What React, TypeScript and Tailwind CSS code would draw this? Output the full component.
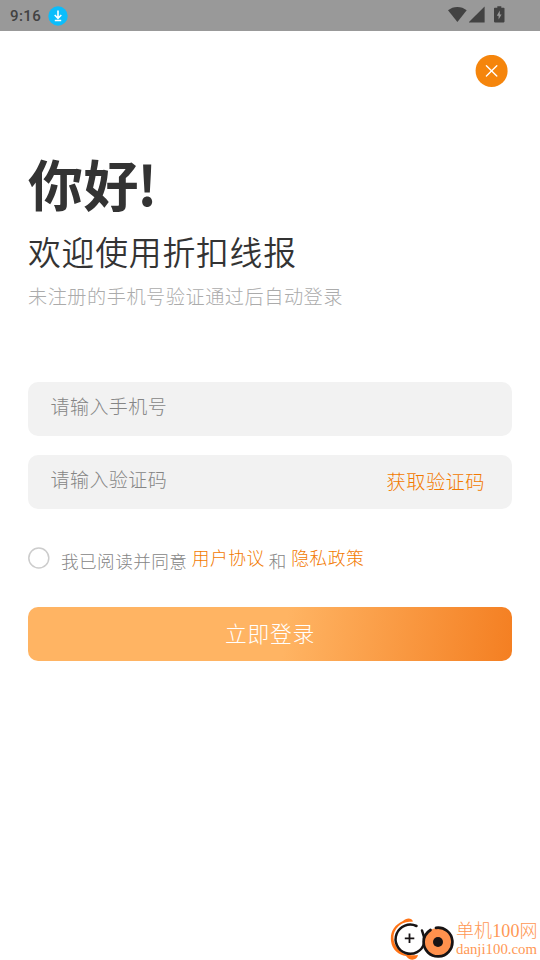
import React from 'react';

export default function App() {
  return (
    <div className="flex h-[960px] w-[540px] flex-col overflow-hidden bg-white font-['Noto_Sans_CJK_SC',sans-serif] font-light">
      <StatusBar />

      <div className="flex justify-end pt-6 pr-8">
        <button aria-label="关闭">
          <svg width="33" height="32" viewBox="0 0 33 32">
            <circle cx="16.6" cy="15.9" r="16" fill="#f5850c" />
            <path d="M11.4 10.7l10.4 10.4M21.8 10.7L11.4 21.1" stroke="#fff" strokeWidth="1.4" strokeLinecap="round" />
          </svg>
        </button>
      </div>

      <main className="flex flex-1 flex-col px-7">
        <h1 className="mt-[55px] h-[80px] text-[55px] leading-[80px] font-bold tracking-[0.5px] text-[#333]">
          你好<span className="-ml-[2px]">!</span>
        </h1>
        <h2 className="mt-[4px] h-[50px] text-[32.8px] leading-[50px] font-[350] tracking-[0.8px] text-[#333]">欢迎使用折扣线报</h2>
        <p className="mt-[6px] h-[28px] text-[19.2px] leading-[28px] tracking-[0.5px] text-[#ababab]">未注册的手机号验证通过后自动登录</p>

        <form className="mt-[72px] flex flex-col">
          <Field label="请输入手机号" />
          <div className="h-[19px]" />
          <Field label="请输入验证码">
            <span className="pt-[2px] text-[19.2px] tracking-[0.5px] text-[#f27a00]">获取验证码</span>
          </Field>

          <div className="mt-[34px] flex h-[30px] items-center text-[17.6px] leading-[30px] tracking-[0.45px] text-[#858585]">
            <svg width="22" height="22" viewBox="0 0 22 22">
              <circle cx="10.8" cy="11" r="10" fill="none" stroke="#ccc" strokeWidth="1.5" />
            </svg>
            <span className="ml-[11px] pt-[5px]">我已阅读并同意</span>
            <a className="-mt-[2px] ml-[4.5px] text-[17.8px] text-[#f27a00]">用户协议</a>
            <span className="ml-[4px] pt-[5px]">和</span>
            <a className="-mt-[2px] ml-[4.5px] text-[17.8px] text-[#f27a00]">隐私政策</a>
          </div>

          <button
            type="button"
            className="mt-[34px] h-[54px] rounded-[10px] bg-[linear-gradient(97deg,#ffb463_0%,#ffb463_53%,#f47f22_100%)] pb-[2px] text-[21.8px] leading-[50px] tracking-[0.7px] text-white"
          >
            立即登录
          </button>
        </form>
      </main>

      <Watermark />
    </div>
  );
}

function StatusBar() {
  return (
    <header className="flex h-[31px] shrink-0 items-center bg-[#999] pr-[35px] pl-[10px] text-[#424242]">
      <span className="pt-px font-[Roboto,sans-serif] text-[15px] font-medium tracking-[0.4px]">9:16</span>
      <svg className="ml-[7px]" width="20" height="20" viewBox="0 0 20 20">
        <circle cx="10" cy="10" r="9.7" fill="#0bbdfb" />
        <path d="M10 4.5v7.5M6.7 9l3.3 3.3L13.3 9M6.8 14.5h6.4" fill="none" stroke="#fff" strokeWidth="1.6" />
      </svg>
      <div className="-mt-[2px] ml-auto flex items-center">
        <svg width="20" height="18" viewBox="0 0 20 18" fill="currentColor">
          <path d="M0 4.3a14.5 14.5 0 0 1 18.7 0L9.4 16z" />
        </svg>
        <svg className="ml-[1px]" width="17" height="18" viewBox="0 0 17 18" fill="currentColor">
          <path d="M-.4 16.4L15.6.4v16z" />
        </svg>
        <svg className="ml-[8px]" width="11" height="18" viewBox="0 0 11 18">
          <path d="M.8 1.8h2.5V.2h4v1.6h2.4a.8.8 0 0 1 .8.8v13a.8.8 0 0 1-.8.8H.8a.8.8 0 0 1-.8-.8v-13a.8.8 0 0 1 .8-.8z" fill="currentColor" />
          <path d="M5.8 4.6L2.8 9.7h1.8v3.8l3-5H5.8z" fill="#999" />
        </svg>
      </div>
    </header>
  );
}

function Field({ label, children }: { label: string; children?: React.ReactNode }) {
  return (
    <div className="flex h-[54px] justify-between rounded-[10px] bg-[#f2f2f2] pr-[27px] pl-[22.5px] leading-[48px]">
      <span className="text-[19px] tracking-[0.45px] text-[#858585]">{label}</span>
      {children}
    </div>
  );
}

function Watermark() {
  return (
    <footer className="flex h-[44px] shrink-0 justify-end text-[#ff9854]">
      <svg width="64" height="44" viewBox="0 0 64 44" fill="none">
        <path
          d="M23 5.5C22 1.5 16 1.5 13 5C4 9 0 16 1 25C2 34 9 39 16 40C19 45 27 45 28 39C21 40 14 39 9 34C1 26 2 15 10 9C14 6 18 6 23 5.5z"
          fill="#ff7417"
        />
        <path d="M26.5 10A14.6 14.6 0 1 0 34.3 27Q34.5 20 32 14.5" stroke="#171314" strokeWidth="2.5" strokeLinecap="round" />
        <path d="M19.5 17.5v9.5M14.8 22.3h9.5" stroke="#171314" strokeWidth="1.8" />
        <circle cx="48" cy="26" r="14" fill="#ff914d" />
        <path d="M46 11.8A14.4 14.4 0 1 1 33.6 26C33.6 20.5 36.5 16.5 40.5 14" stroke="#171314" strokeWidth="2.7" strokeLinecap="round" />
        <circle cx="48" cy="26" r="5" fill="#171314" />
      </svg>
      <div className="ml-[2px] flex w-[84px] flex-col font-['Liberation_Serif','Noto_Sans_CJK_SC',serif]">
        <span className="h-[24px] text-[18px] leading-[30px] tracking-[0.1px] whitespace-nowrap">单机100网</span>
        <span className="text-[14.8px] leading-[18px] whitespace-nowrap">danji100.com</span>
      </div>
    </footer>
  );
}
